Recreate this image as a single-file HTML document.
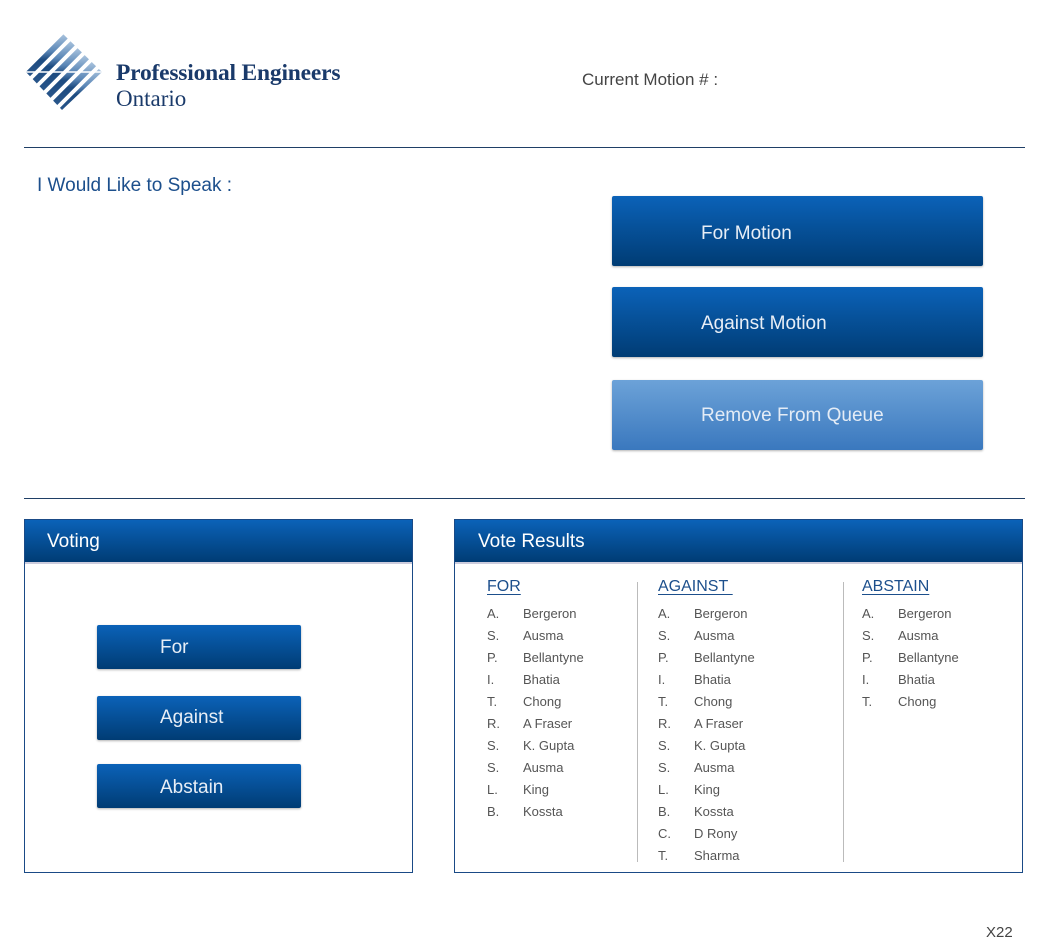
<!DOCTYPE html>
<html><head><style>
body{margin:0;width:1050px;height:950px;background:#fff;font-family:"Liberation Sans",sans-serif;position:relative;overflow:hidden}
.a{position:absolute}
.btn{position:absolute;background:linear-gradient(#0b62b8,#003c74);color:#e8eef6;border-radius:2px;box-shadow:0 1px 2px rgba(0,0,0,.3)}
.hr{position:absolute;left:24px;width:1001px;height:1px;background:#1f3f66}
.panel{position:absolute;border:1px solid #1a4a86;background:#fff}
.ph{position:absolute;left:0;right:0;top:0;height:42px;background:linear-gradient(#0b62b8,#003c74);color:#fff;font-size:19px;line-height:43px;border-bottom:2px solid #ccd;}
.row{position:absolute;font-size:13px;color:#555}
.hd{position:absolute;font-size:16px;color:#1c4f8c;text-decoration:underline;text-underline-offset:3px}
.vl{position:absolute;width:1px;background:#bbb;top:582px;height:280px}
</style></head><body>
<svg class="a" style="left:24px;top:30px" width="80" height="80" viewBox="0 0 80 80">
<defs>
<linearGradient id="g" x1="0" y1="0" x2="0" y2="1"><stop offset="0" stop-color="#cfe0f0"/><stop offset="0.45" stop-color="#5a86b6"/><stop offset="0.6" stop-color="#1d4b80"/><stop offset="1" stop-color="#2d5a8e"/></linearGradient>
<clipPath id="c"><polygon points="1,41 38,3 78,42 38,80"/></clipPath>
</defs>
<g clip-path="url(#c)" stroke="url(#g)" stroke-width="6">
<line x1="-4" y1="52" x2="52" y2="-4"/>
<line x1="3" y1="59" x2="59" y2="3"/>
<line x1="10" y1="66" x2="66" y2="10"/>
<line x1="17" y1="73" x2="73" y2="17"/>
<line x1="24" y1="80" x2="80" y2="24"/>
<line x1="31" y1="87" x2="87" y2="31"/>
</g>
<g clip-path="url(#c)" stroke="#fff" stroke-width="1.5">
<line x1="0" y1="42" x2="80" y2="42"/>
</g>
</svg>
<div class="a" style="left:116px;top:60px;font-family:'Liberation Serif',serif;font-weight:bold;font-size:23.5px;color:#1a3a6a;letter-spacing:-0.2px">Professional Engineers</div>
<div class="a" style="left:116px;top:86px;font-family:'Liberation Serif',serif;font-size:23px;color:#1a3a6a">Ontario</div>
<div class="a" style="left:582px;top:70px;font-size:17px;color:#444">Current Motion # :</div>
<div class="hr" style="top:147px"></div>
<div class="a" style="left:37px;top:175px;font-size:19px;color:#1c4f8c">I Would Like to Speak :</div>
<div class="btn" style="left:612px;top:196px;width:371px;height:70px;"><span class="a" style="left:89px;top:27px;font-size:19px">For Motion</span></div>
<div class="btn" style="left:612px;top:287px;width:371px;height:70px;"><span class="a" style="left:89px;top:26px;font-size:19px">Against Motion</span></div>
<div class="btn" style="left:612px;top:380px;width:371px;height:70px;background:linear-gradient(#6ca2d8,#3a78be)"><span class="a" style="left:89px;top:25px;font-size:19px;color:#e4ecf6">Remove From Queue</span></div>
<div class="hr" style="top:498px"></div>
<div class="panel" style="left:24px;top:519px;width:387px;height:352px"><div class="ph" style="padding-left:22px">Voting</div></div>
<div class="btn" style="left:97px;top:625px;width:204px;height:44px"><span class="a" style="left:63px;top:12px;font-size:19px">For</span></div>
<div class="btn" style="left:97px;top:696px;width:204px;height:44px"><span class="a" style="left:63px;top:11px;font-size:19px">Against</span></div>
<div class="btn" style="left:97px;top:764px;width:204px;height:44px"><span class="a" style="left:63px;top:13px;font-size:19px">Abstain</span></div>
<div class="panel" style="left:454px;top:519px;width:567px;height:352px"><div class="ph" style="padding-left:23px">Vote Results</div></div>
<div class="hd" style="left:487px;top:578px">FOR</div>
<div class="hd" style="left:658px;top:578px">AGAINST&nbsp;</div>
<div class="hd" style="left:862px;top:578px">ABSTAIN</div>
<div class="vl" style="left:637px"></div><div class="vl" style="left:843px"></div>
<div id="lists"></div>
<div class="a" style="left:986px;top:924px;font-size:15px;color:#444">X22</div>
<script>
var c=[[487,[["A.","Bergeron"],["S.","Ausma"],["P.","Bellantyne"],["I.","Bhatia"],["T.","Chong"],["R.","A Fraser"],["S.","K. Gupta"],["S.","Ausma"],["L.","King"],["B.","Kossta"]]],
[658,[["A.","Bergeron"],["S.","Ausma"],["P.","Bellantyne"],["I.","Bhatia"],["T.","Chong"],["R.","A Fraser"],["S.","K. Gupta"],["S.","Ausma"],["L.","King"],["B.","Kossta"],["C.","D Rony"],["T.","Sharma"]]],
[862,[["A.","Bergeron"],["S.","Ausma"],["P.","Bellantyne"],["I.","Bhatia"],["T.","Chong"]]]];
var h="";c.forEach(function(col){col[1].forEach(function(r,i){var y=606+i*22;h+='<div class="row" style="left:'+col[0]+'px;top:'+y+'px">'+r[0]+'</div><div class="row" style="left:'+(col[0]+36)+'px;top:'+y+'px">'+r[1]+'</div>';});});
document.getElementById("lists").innerHTML=h;
</script>
</body></html>
